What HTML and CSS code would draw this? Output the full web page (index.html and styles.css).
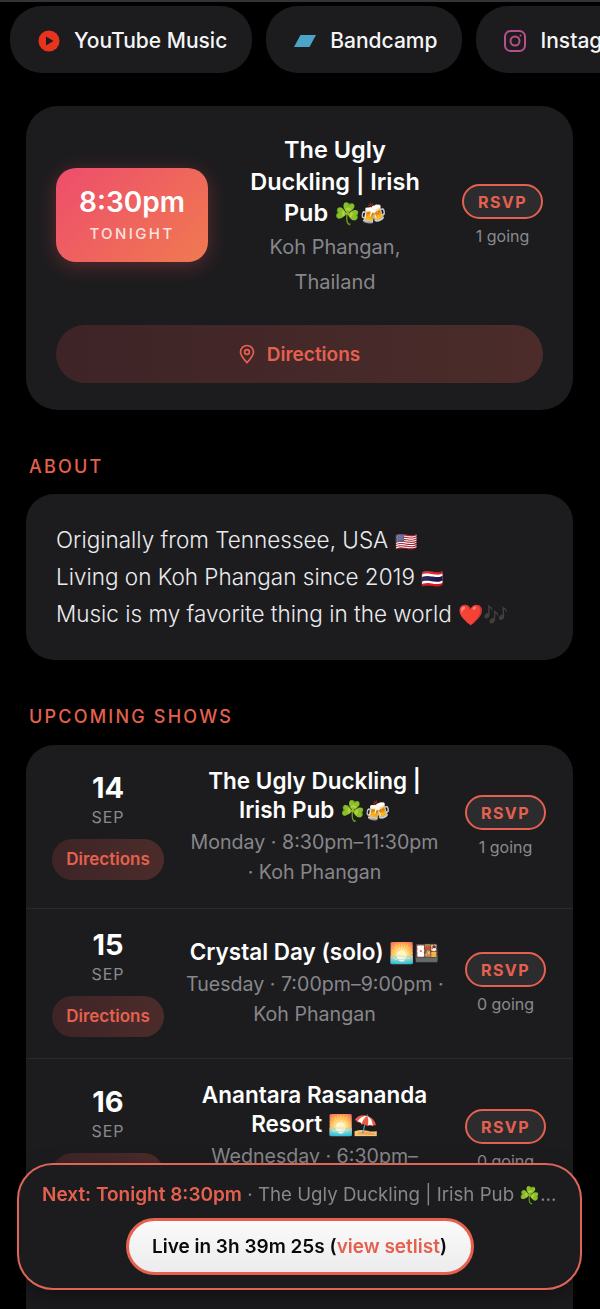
FILE: index.html
```html
<!DOCTYPE html>
<html lang="en">
<head>
<meta charset="utf-8">
<title>Shows</title>
<link rel="stylesheet" href="styles.css">
</head>
<body>
<div class="page">
  <nav class="chips">
    <a class="chip"><svg class="chip-icon" viewBox="0 0 22 22"><circle cx="11" cy="11" r="10.5" fill="#e8341f"/><path d="M8 6.5 15.5 11 8 15.5z" fill="#1c1c1e"/></svg>YouTube Music</a>
    <a class="chip"><svg class="chip-icon" viewBox="0 0 22 22"><path d="M6.5 5H22l-6.5 12H0z" fill="#4ba3c7"/></svg>Bandcamp</a>
    <a class="chip"><svg class="chip-icon" viewBox="0 0 22 22" fill="none" stroke="#b5508a" stroke-width="2"><rect x="1" y="1" width="20" height="20" rx="5.5"/><circle cx="11" cy="11" r="4.5"/><circle cx="16.5" cy="5.5" r="1" fill="#b5508a" stroke="none"/></svg>Instagram</a>
  </nav>

  <section class="hero">
    <div class="hero-top">
      <div class="time-box">
        <div class="time">8:30pm</div>
        <div class="when">TONIGHT</div>
      </div>
      <div class="hero-info">
        <div class="hero-title">The Ugly Duckling | Irish Pub <span class="emoji">☘️🍻</span></div>
        <div class="hero-place">Koh Phangan, Thailand</div>
      </div>
      <div class="rsvp-col">
        <a class="rsvp">RSVP</a>
        <div class="going">1 going</div>
      </div>
    </div>
    <a class="dir-bar"><svg class="pin" viewBox="0 0 16 20" fill="none" stroke="#e5604f" stroke-width="1.7"><path d="M8 18.6C4.6 15 1.5 11.6 1.5 8a6.5 6.5 0 0 1 13 0c0 3.6-3.1 7-6.500 10.600z"/><circle cx="8" cy="8" r="2.400"/></svg>Directions</a>
  </section>

  <h2 class="label about-label">ABOUT</h2>
  <section class="about">
    <div>Originally from Tennessee, USA <span class="emoji flag">🇺🇸</span></div>
    <div>Living on Koh Phangan since 2019 <span class="emoji flag">🇹🇭</span></div>
    <div>Music is my favorite thing in the world <span class="emoji">❤️</span><span class="emoji notes">🎶</span></div>
  </section>

  <h2 class="label shows-label">UPCOMING SHOWS</h2>
  <section class="shows">
    <article class="show">
      <div class="date"><div class="day">14</div><div class="month">SEP</div><a class="dir-pill">Directions</a></div>
      <div class="info"><div class="title">The Ugly Duckling | Irish Pub <span class="emoji">☘️🍻</span></div><div class="meta">Monday · 8:30pm–11:30pm<br>· Koh Phangan</div></div>
      <div class="rsvp-col"><a class="rsvp">RSVP</a><div class="going">1 going</div></div>
    </article>
    <article class="show">
      <div class="date"><div class="day">15</div><div class="month">SEP</div><a class="dir-pill">Directions</a></div>
      <div class="info"><div class="title">Crystal Day (solo) <span class="emoji">🌅🍱</span></div><div class="meta">Tuesday · 7:00pm–9:00pm ·<br>Koh Phangan</div></div>
      <div class="rsvp-col"><a class="rsvp">RSVP</a><div class="going">0 going</div></div>
    </article>
    <article class="show">
      <div class="date"><div class="day">16</div><div class="month">SEP</div><a class="dir-pill">Directions</a></div>
      <div class="info"><div class="title">Anantara Rasananda Resort <span class="emoji">🌅⛱️</span></div><div class="meta">Wednesday · 6:30pm–<br>9:30pm · Koh Phangan</div></div>
      <div class="rsvp-col"><a class="rsvp">RSVP</a><div class="going">0 going</div></div>
    </article>
  </section>
</div>

<aside class="next-bar">
  <div class="next-line"><span class="next-strong">Next: Tonight 8:30pm</span> · The Ugly Duckling | Irish Pub <span class="emoji">☘️🍻</span></div>
  <a class="live-btn">Live in 3h 39m 25s (<span class="live-link">view setlist</span>)</a>
</aside>
</body>
</html>
```
FILE: styles.css
```css
* { box-sizing: border-box; }
html, body { margin: 0; height: 100%; background: #000; overflow: hidden; }
body { font-family: Inter, "Noto Sans", "Liberation Sans", sans-serif; color: #fff; }
.page { height: 100vh; display: flex; flex-direction: column; overflow: hidden; border-top: 2px solid #333; }
.emoji { font-size: .9em; line-height: 0; }
.flag { font-size: .8em; }
.notes { filter: grayscale(1) brightness(.6); }

.chips { flex: none; display: flex; gap: 14px; padding: 4px 0 0 10px; overflow: hidden; }
.chip { flex: none; display: flex; align-items: center; gap: 14px; height: 67px; padding: 2px 25px 0 28px; border-radius: 32px; background: #1c1c1e; font-size: 21px; font-weight: 500; color: #f5f5f7; }
.chip-icon { width: 22px; height: 22px; flex: none; }

.hero { flex: none; margin: 33px 27px 0 26px; padding: 25px 30px 27px; background: #1c1c1e; border-radius: 32px; }
.hero-top { display: flex; align-items: center; gap: 30px; }
.time-box { flex: none; width: 152px; height: 94px; border-radius: 20px; display: flex; flex-direction: column; align-items: center; justify-content: center; background: linear-gradient(135deg, #ee4d6c, #f07a50); box-shadow: 0 4px 20px rgba(238, 80, 90, .3); }
.time { font-size: 28px; line-height: 34px; font-weight: 600; margin-top: -1px; }
.when { font-size: 15px; line-height: 22px; letter-spacing: 2.4px; font-weight: 500; color: #fbe3df; margin-top: 4px; }
.hero-info { flex: 1; min-width: 0; padding-top: 3px; text-align: center; }
.hero-title { font-size: 23.5px; line-height: 31.5px; font-weight: 600; }
.hero-place { margin-top: 1px; font-size: 20px; line-height: 35px; color: #87878b; }

.rsvp-col { flex: none; width: 81px; display: flex; flex-direction: column; align-items: center; }
.rsvp { width: 81px; height: 35px; display: flex; align-items: center; justify-content: center; border: 2.5px solid #e5604f; border-radius: 18px; background: #2c2c2e; color: #e5604f; font-size: 16px; font-weight: 700; letter-spacing: 1.4px; }
.going { margin-top: 7px; font-size: 16px; line-height: 20px; color: #8a8a8e; white-space: nowrap; }

.dir-bar { display: flex; align-items: center; justify-content: center; gap: 12px; height: 58px; margin-top: 25.5px; border-radius: 29px; background: linear-gradient(90deg, #3e2427, #4b2c2a); color: #e5604f; font-size: 19px; font-weight: 600; }
.pin { width: 16px; height: 20px; }

.label { flex: none; margin: 0; font-size: 18px; line-height: 24px; font-weight: 500; letter-spacing: 2.2px; color: #e5604f; padding-left: 29px; }
.about-label { margin-top: 44.5px; }
.about { flex: none; margin: 15px 27px 0 26px; padding: 27px 30px 28px; background: #1c1c1e; border-radius: 28px; font-size: 22.5px; line-height: 37px; font-weight: 300; color: #ececee; }
.shows-label { margin-top: 45px; }

.shows { flex: 1; margin: 16px 27px 0 26px; background: #1c1c1e; border-radius: 28px 28px 0 0; overflow: hidden; }
.show { display: flex; align-items: center; gap: 22px; padding: 21px 27px 21px 26px; border-bottom: 1px solid #2a2a2c; }
.date { flex: none; width: 112px; display: flex; flex-direction: column; align-items: center; }
.day { font-size: 29px; line-height: 30px; font-weight: 700; }
.month { margin-top: 3px; font-size: 16px; line-height: 22px; letter-spacing: 1px; color: #8a8a8e; }
.dir-pill { width: 112px; height: 41px; margin-top: 11px; display: flex; align-items: center; justify-content: center; border-radius: 21px; background: linear-gradient(90deg, #3e2427, #4b2c2a); color: #e5604f; font-size: 17px; font-weight: 600; }
.info { flex: 1; min-width: 0; text-align: center; }
.title { font-size: 22.5px; line-height: 29.5px; font-weight: 600; }
.meta { margin-top: 2px; font-size: 19.6px; line-height: 30px; color: #87878b; white-space: nowrap; }

.next-bar { position: fixed; left: 17px; right: 18px; bottom: 19px; height: 127px; padding: 17px 20px 0; display: flex; flex-direction: column; align-items: center; background: #1c1c1e; border: 2px solid #df6558; border-radius: 36px; box-shadow: 0 10px 24px rgba(0, 0, 0, .35); }
.next-line { width: 100%; padding-left: 3px; font-size: 18.7px; line-height: 26px; color: #87878b; white-space: nowrap; overflow: hidden; text-overflow: ellipsis; }
.next-strong { color: #e5604f; font-size: 19px; font-weight: 600; }
.live-btn { margin-top: 10px; width: 348px; height: 57px; display: flex; align-items: center; justify-content: center; white-space: pre; border: 3px solid #e5604f; border-radius: 29px; background: linear-gradient(180deg, #fafafa, #ececee); color: #0a0a0a; font-size: 19px; font-weight: 600; }
.live-link { color: #e5604f; }
```
